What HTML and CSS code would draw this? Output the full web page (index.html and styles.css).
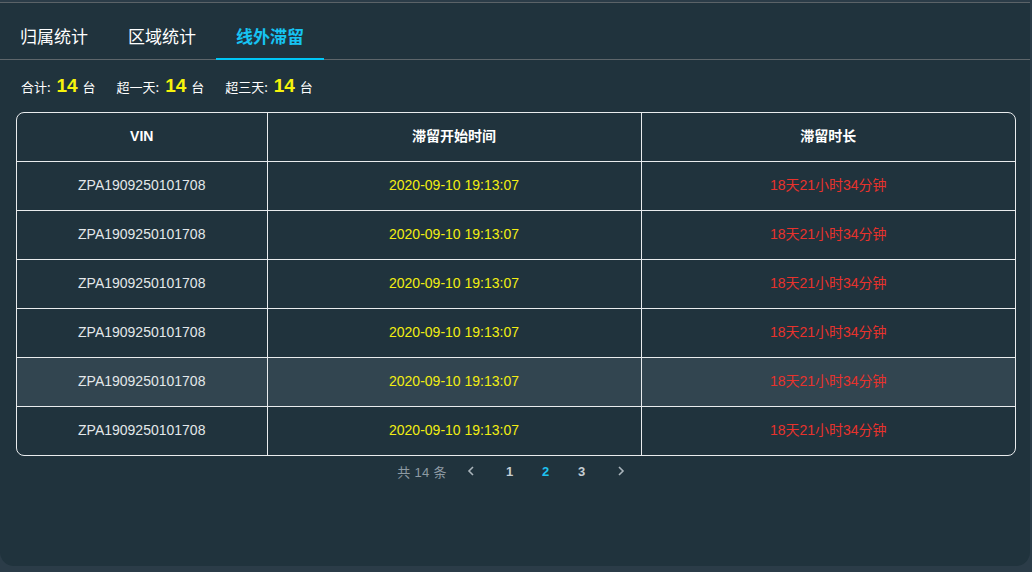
FILE: index.html
```html
<!DOCTYPE html>
<html lang="zh">
<head>
<meta charset="utf-8">
<link rel="stylesheet" href="styles.css">
</head>
<body>
<div class="panel">
  <div class="tabs">
    <div class="tab">归属统计</div>
    <div class="tab">区域统计</div>
    <div class="tab active">线外滞留</div>
  </div>
  <div class="stats">
    <span class="stat">合计: <b>14</b> 台</span>
    <span class="stat">超一天: <b>14</b> 台</span>
    <span class="stat">超三天: <b>14</b> 台</span>
  </div>
  <div class="table-wrap">
    <table class="grid">
      <colgroup><col class="c1"><col class="c2"><col class="c3"></colgroup>
      <thead>
        <tr><th>VIN</th><th>滞留开始时间</th><th>滞留时长</th></tr>
      </thead>
      <tbody>
        <tr><td class="vin">ZPA1909250101708</td><td class="time">2020-09-10 19:13:07</td><td class="dur">18天21小时34分钟</td></tr>
        <tr><td class="vin">ZPA1909250101708</td><td class="time">2020-09-10 19:13:07</td><td class="dur">18天21小时34分钟</td></tr>
        <tr><td class="vin">ZPA1909250101708</td><td class="time">2020-09-10 19:13:07</td><td class="dur">18天21小时34分钟</td></tr>
        <tr><td class="vin">ZPA1909250101708</td><td class="time">2020-09-10 19:13:07</td><td class="dur">18天21小时34分钟</td></tr>
        <tr class="hover"><td class="vin">ZPA1909250101708</td><td class="time">2020-09-10 19:13:07</td><td class="dur">18天21小时34分钟</td></tr>
        <tr><td class="vin">ZPA1909250101708</td><td class="time">2020-09-10 19:13:07</td><td class="dur">18天21小时34分钟</td></tr>
      </tbody>
    </table>
  </div>
  <div class="pager">
    <span class="total">共 14 条</span>
    <span class="arrow"><svg width="8" height="10" viewBox="0 0 8 10"><path d="M6 1 L2 5 L6 9" fill="none" stroke="currentColor" stroke-width="1.6"/></svg></span>
    <span class="page">1</span>
    <span class="page current">2</span>
    <span class="page">3</span>
    <span class="arrow"><svg width="8" height="10" viewBox="0 0 8 10"><path d="M2 1 L6 5 L2 9" fill="none" stroke="currentColor" stroke-width="1.6"/></svg></span>
  </div>
</div>
</body>
</html>
```
FILE: styles.css
```css
html, body {
  margin: 0;
  padding: 0;
  background: #2b3c48;
  font-family: "Liberation Sans", Arial, "Noto Sans CJK SC", sans-serif;
}
.panel {
  box-sizing: border-box;
  width: 1030px;
  height: 564px;
  margin-top: 2px;
  background: #20333d;
  border-top: 1px solid #5b6368;
  border-radius: 0 0 14px 14px;
  padding: 0 16px;
}
.tabs {
  display: flex;
  height: 56px;
  margin: 0 -16px;
  border-bottom: 1px solid #5e666b;
}
.tab {
  box-sizing: border-box;
  padding: 8px 20px 0;
  height: 57px;
  font-size: 17px;
  line-height: 50px;
  color: #ffffff;
  font-family: "Noto Sans CJK SC", sans-serif;
}
.tab.active {
  color: #16c3f2;
  font-weight: bold;
  border-bottom: 2px solid #00c6f5;
}
.stats {
  display: flex;
  gap: 21px;
  height: 52px;
  align-items: center;
  padding-left: 5px;
  padding-bottom: 1px;
  box-sizing: border-box;
  font-size: 13px;
  color: #ffffff;
  font-family: "Noto Sans CJK SC", sans-serif;
}
.stat b {
  font-family: "Liberation Sans", Arial, sans-serif;
  font-size: 19px;
  color: #f6f30c;
  margin: 0 2px 0 3px;
}
.table-wrap {
  border: 1px solid #e9ecee;
  border-radius: 8px;
  overflow: hidden;
  width: 998px;
}
.grid {
  width: 100%;
  border-collapse: collapse;
  table-layout: fixed;
  font-size: 14px;
}
.c1 { width: 250px; }
.c2 { width: 374px; }
.grid th, .grid td {
  box-sizing: border-box;
  height: 49px;
  padding: 0 0 2px;
  line-height: 16px;
  text-align: center;
  border-left: 1px solid #e9ecee;
  border-top: 1px solid #e9ecee;
}
.grid th { height: 48px; }
.grid th:first-child, .grid td:first-child { border-left: none; }
.grid thead th { border-top: none; color: #ffffff; font-weight: bold; font-family: "Liberation Sans", "Noto Sans CJK SC", sans-serif; }
.grid td.vin { color: #e3e8ea; }
.grid td.time { color: #f2ee12; }
.grid td.dur { color: #e8322c; }
.grid tr.hover td { background: #324550; }
.pager {
  display: flex;
  justify-content: center;
  align-items: center;
  height: 30px;
  font-size: 13px;
  color: #8d9aa3;
  padding-left: 9px;
}
.total { margin-right: 3px; letter-spacing: 0.3px; }
.arrow { display: inline-flex; width: 42px; justify-content: center; color: #aab5bc; }
.page { width: 36px; text-align: center; font-weight: bold; color: #c5ced4; }
.page.current { color: #1ec2f0; }
```
